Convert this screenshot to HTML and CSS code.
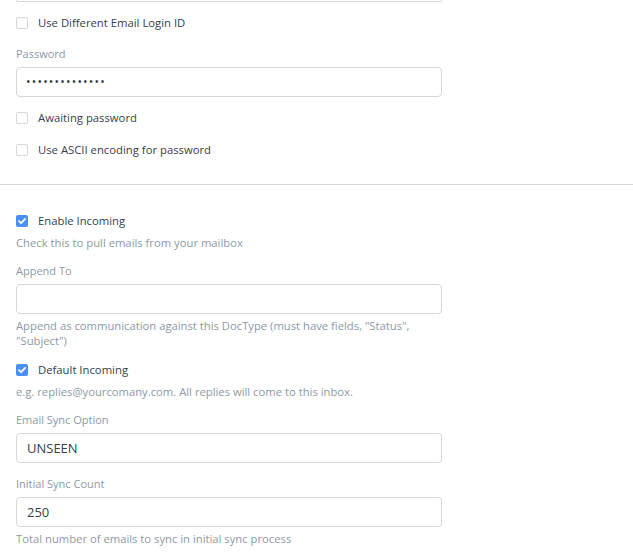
FILE: index.html
```html
<!DOCTYPE html>
<html>
<head>
<meta charset="utf-8">
<link rel="stylesheet" href="styles.css">
</head>
<body>
<div class="section">
  <div class="input-stub"></div>
  <div class="check cb-first"><span class="box"></span><span class="cb-label">Use Different Email Login ID</span></div>
  <div class="field field-first">
    <div class="label">Password</div>
    <div class="input dots">••••••••••••••</div>
  </div>
  <div class="check cb-after-input"><span class="box"></span><span class="cb-label">Awaiting password</span></div>
  <div class="check cb-next"><span class="box"></span><span class="cb-label">Use ASCII encoding for password</span></div>
</div>
<hr class="divider">
<div class="section">
  <div class="check cb-top"><span class="box checked"><svg viewBox="0 0 12 12" width="12" height="12"><path d="M3 6.2 L5.1 8.2 L9.2 3.9" fill="none" stroke="#fff" stroke-width="1.8" stroke-linecap="round" stroke-linejoin="round"/></svg></span><span class="cb-label">Enable Incoming</span></div>
  <div class="help help-cb">Check this to pull emails from your mailbox</div>
  <div class="field">
    <div class="label">Append To</div>
    <div class="input"></div>
    <div class="help help-input">Append as communication against this DocType (must have fields, "Status", "Subject")</div>
  </div>
  <div class="check cb-after-help"><span class="box checked"><svg viewBox="0 0 12 12" width="12" height="12"><path d="M3 6.2 L5.1 8.2 L9.2 3.9" fill="none" stroke="#fff" stroke-width="1.8" stroke-linecap="round" stroke-linejoin="round"/></svg></span><span class="cb-label">Default Incoming</span></div>
  <div class="help help-cb">e.g. replies@yourcomany.com. All replies will come to this inbox.</div>
  <div class="field">
    <div class="label">Email Sync Option</div>
    <div class="input">UNSEEN</div>
  </div>
  <div class="field">
    <div class="label">Initial Sync Count</div>
    <div class="input">250</div>
    <div class="help help-input">Total number of emails to sync in initial sync process</div>
  </div>
</div>
</body>
</html>
```
FILE: styles.css
```css
html, body {
  margin: 0;
  padding: 0;
  background: #fff;
}
body {
  font-family: "Open Sans", "Noto Sans", sans-serif;
  color: #36414c;
  overflow: hidden;
  height: 555px;
}
.section {
  padding-left: 16px;
  width: 426px;
}
.input-stub {
  height: 1px;
  border: 1px solid #d1d8dd;
  border-top: none;
  border-radius: 0 0 4px 4px;
}
.check {
  display: flex;
  align-items: center;
  height: 18px;
}
.box {
  width: 10px;
  height: 10px;
  border: 1px solid #d1d8dd;
  border-radius: 2px;
  background: #fff;
  margin-right: 10px;
  flex: none;
  display: flex;
  align-items: center;
  justify-content: center;
}
.box.checked {
  width: 12px;
  height: 12px;
  border: none;
  background: #4a8ff5;
}
.cb-label {
  font-size: 11.3px;
  color: #36414c;
  line-height: 18px;
}
.cb-first { margin-top: 12px; }
.cb-after-input { margin-top: 12px; }
.cb-next { margin-top: 14px; }
.cb-top { margin-top: 27px; }
.cb-after-help { margin-top: 13px; }
.field { margin-top: 12px; }
.field-first { margin-top: 13px; }
.label {
  font-size: 11px;
  line-height: 18px;
  color: #8d99a6;
  margin-bottom: 4px;
}
.input {
  box-sizing: border-box;
  height: 30px;
  border: 1px solid #d1d8dd;
  border-radius: 4px;
  padding: 0 10px;
  font-size: 13px;
  line-height: 28px;
  color: #36414c;
}
.dots {
  font-size: 12px;
  letter-spacing: 1.2px;
  color: #36414c;
  padding-left: 9px;
}
.help {
  font-size: 11.25px;
  line-height: 15px;
  color: #8d99a6;
}
.help-cb { margin-top: 5px; }
.help-input { margin-top: 4px; }
.divider {
  border: none;
  border-top: 1px solid #d1d8dd;
  margin: 25px 0 0 0;
  height: 0;
}
```
